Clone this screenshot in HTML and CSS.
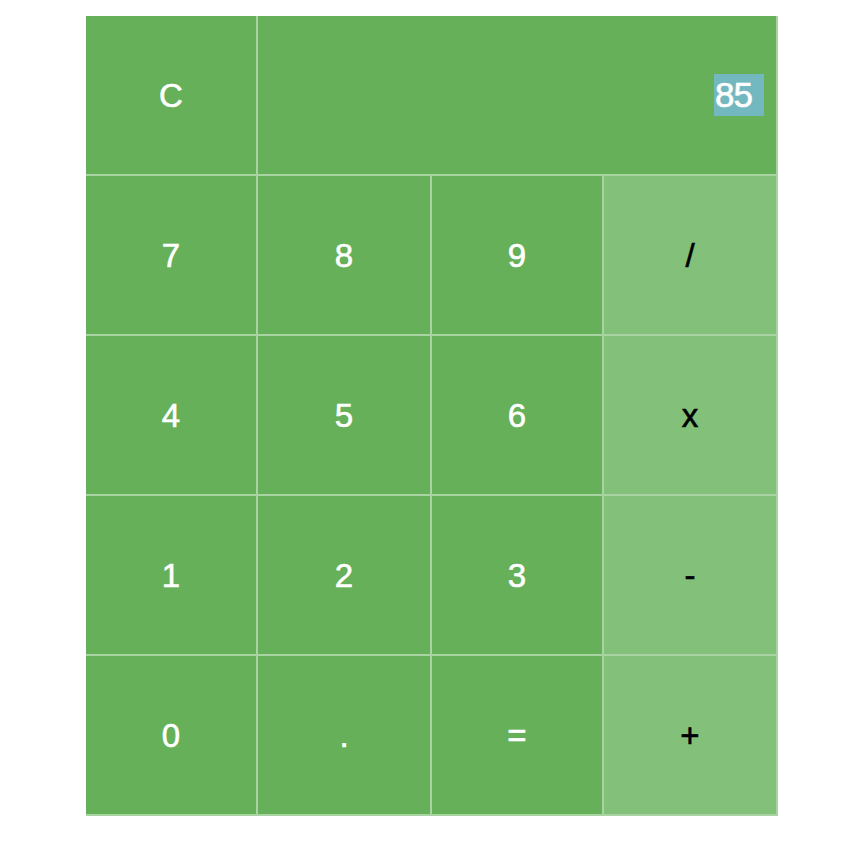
FILE: index.html
```html
<!DOCTYPE html>
<html>
<head>
<meta charset="utf-8">
<link rel="stylesheet" href="styles.css">
</head>
<body>
<div class="calc">
  <div class="key">C</div>
  <div class="display"><span class="value">85</span></div>
  <div class="key">7</div>
  <div class="key">8</div>
  <div class="key">9</div>
  <div class="key op">/</div>
  <div class="key">4</div>
  <div class="key">5</div>
  <div class="key">6</div>
  <div class="key op">x</div>
  <div class="key">1</div>
  <div class="key">2</div>
  <div class="key">3</div>
  <div class="key op">-</div>
  <div class="key">0</div>
  <div class="key">.</div>
  <div class="key">=</div>
  <div class="key op">+</div>
</div>
</body>
</html>
```

FILE: styles.css
```css
html, body {
  margin: 0;
  padding: 0;
  background: #ffffff;
}
body {
  font-family: "Liberation Sans", Arial, sans-serif;
}
.calc {
  margin: 16px 0 0 86px;
  display: grid;
  grid-template-columns: 172px 174px 172px 174px;
  grid-template-rows: repeat(5, 160px);
  width: 692px;
}
.key, .display {
  background: #65b058;
  border-right: 2px solid #a9d3a3;
  border-bottom: 2px solid #a9d3a3;
  color: #ffffff;
  font-size: 33px;
  -webkit-text-stroke: 0.6px currentColor;
  display: flex;
  align-items: center;
  justify-content: center;
}
.key {
  padding-top: 2px;
}
.key.op {
  background: #83c079;
  color: #000000;
}
.display {
  grid-column: 2 / span 3;
  justify-content: flex-end;
  padding-right: 12px;
}
.value {
  display: inline-block;
  width: 49px;
  height: 42px;
  line-height: 42px;
  padding-left: 1px;
  font-size: 35px;
  letter-spacing: -1px;
  background: #74b8bf;
  color: #ffffff;
  text-align: left;
}
```
